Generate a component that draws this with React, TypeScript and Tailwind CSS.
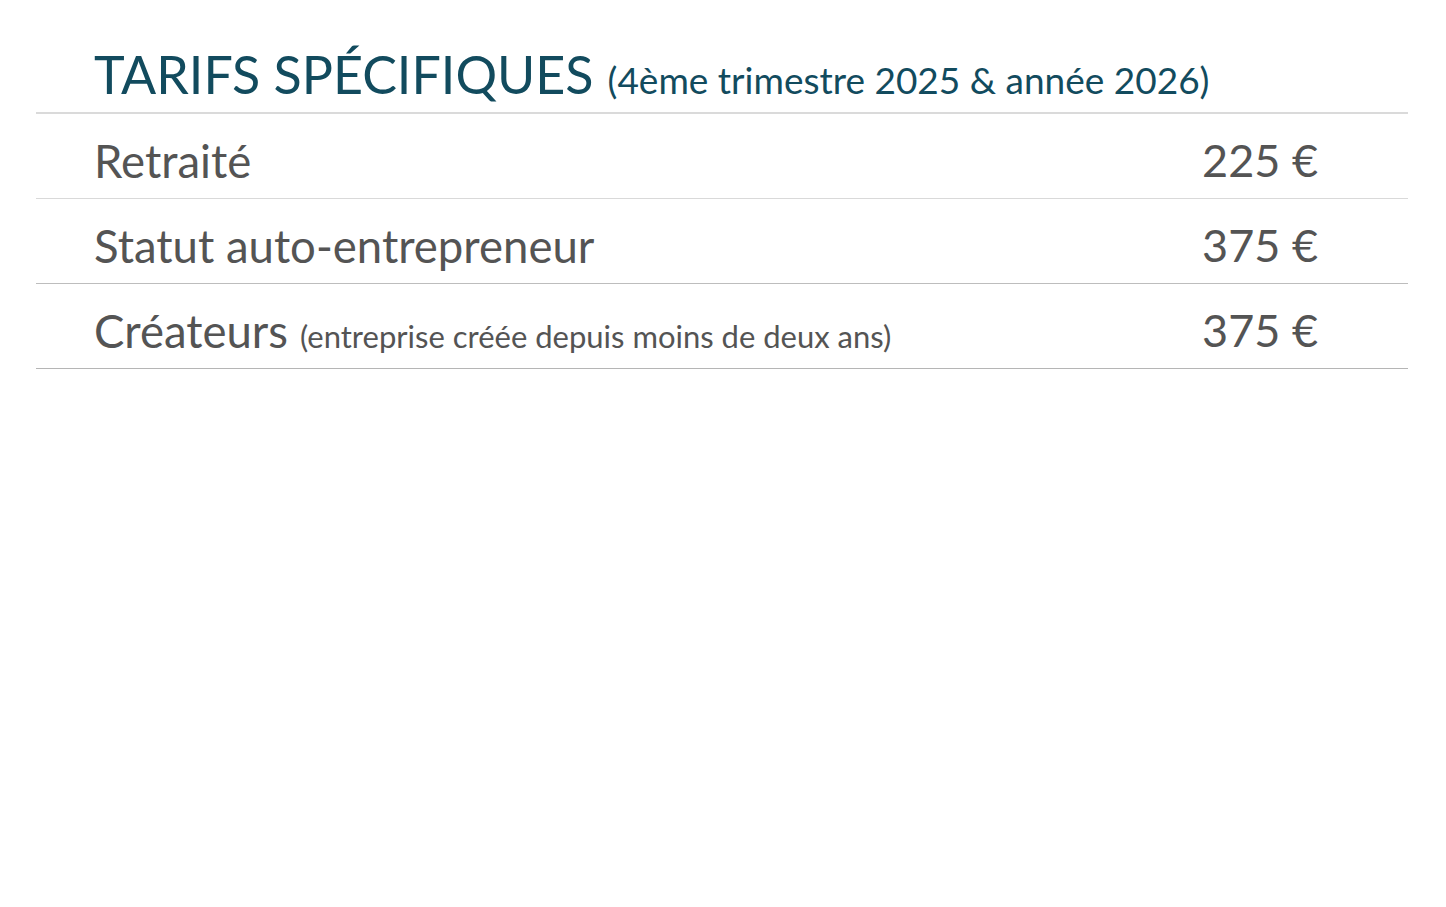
const rows = [
  { label: "Retraité", note: null, price: "225 €", line: "border-[#d9d9d9]" },
  { label: "Statut auto-entrepreneur", note: null, price: "375 €", line: "border-[#bdbdbd]" },
  {
    label: "Créateurs",
    note: "(entreprise créée depuis moins de deux ans)",
    price: "375 €",
    line: "border-[#b5b5b5]",
  },
];

export default function App() {
  return (
    <div className="min-h-screen bg-white font-['Lato',sans-serif] pt-[48px] pl-[36px] pr-[38px]">
      <div className="border-b-2 border-[#dadada] pl-[58px] pb-[12px]">
        <h1 className="flex items-baseline text-[#124b5e] leading-none">
          <span className="text-[52px]">TARIFS SPÉCIFIQUES</span>
          <span className="ml-[14px] text-[37px]">(4ème trimestre 2025 &amp; année 2026)</span>
        </h1>
      </div>
      {rows.map((row) => (
        <div
          key={row.label}
          className={`flex h-[85px] items-end justify-between border-b ${row.line} pl-[58px] pr-[90px] pb-[15px] text-[#545454]`}
        >
          <div className="flex items-baseline leading-none">
            <span className="text-[45.5px]">{row.label}</span>
            {row.note && <span className="ml-[12px] text-[31px]">{row.note}</span>}
          </div>
          <div className="text-[45px] leading-none">{row.price}</div>
        </div>
      ))}
    </div>
  );
}
